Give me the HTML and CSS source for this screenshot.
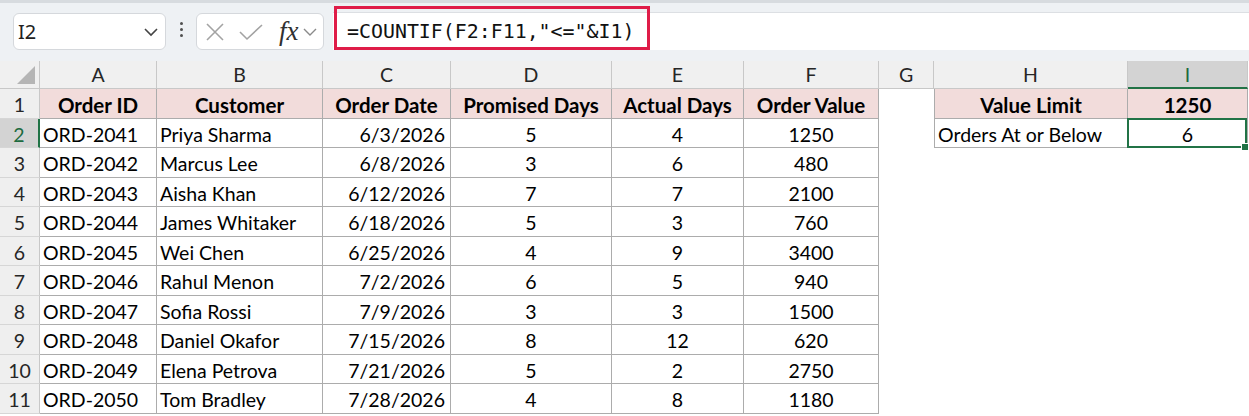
FILE: index.html
```html
<!DOCTYPE html>
<html>
    <head>
        <title>Orders sheet</title>
        <link rel="stylesheet" href="styles.css">
    </head>
    <body>
        <div class="toolbar">
            <div class="namebox">
                <span>I2</span>
                <svg class="chev" width="16" height="10" viewBox="0 0 16 10"><polyline points="2,2 8,8 14,2" fill="none" stroke="#444" stroke-width="1.6"/></svg>
            </div>
            <div class="grip"><i></i><i></i><i></i></div>
            <div class="fxbox">
                <svg width="20" height="20" viewBox="0 0 20 20"><path d="M2 2 L18 18 M18 2 L2 18" stroke="#a3a3a3" stroke-width="1.6" fill="none"/></svg>
                <svg width="26" height="20" viewBox="0 0 26 20"><polyline points="2,10 9,17 24,3" stroke="#a3a3a3" stroke-width="1.6" fill="none"/></svg>
                <span class="fx">fx</span>
                <svg class="chev-sm" width="16" height="10" viewBox="0 0 16 10"><polyline points="2,2 8,8 14,2" fill="none" stroke="#8a8a8a" stroke-width="1.4"/></svg>
            </div>
            <div class="formula">
                <span class="formula-text">=COUNTIF(F2:F11,"&lt;="&amp;I1)</span>
                <div class="highlight"></div>
            </div>
        </div>

        <div class="sheet">
            <div class="corner"><svg width="20" height="20" viewBox="0 0 20 20"><polygon points="19,1 19,19 1,19" fill="#b5b5b5"/></svg></div>
            <div class="colhead">A</div>
            <div class="colhead">B</div>
            <div class="colhead">C</div>
            <div class="colhead">D</div>
            <div class="colhead">E</div>
            <div class="colhead">F</div>
            <div class="colhead">G</div>
            <div class="colhead">H</div>
            <div class="colhead active">I</div>

            <div class="rowhead">1</div>
            <div class="cell t hdr">Order ID</div>
            <div class="cell t hdr">Customer</div>
            <div class="cell t hdr">Order Date</div>
            <div class="cell t hdr">Promised Days</div>
            <div class="cell t hdr">Actual Days</div>
            <div class="cell t hdr">Order Value</div>
            <div class="cell"></div>
            <div class="cell t tl hdr">Value Limit</div>
            <div class="cell t hdr">1250</div>

            <div class="rowhead active">2</div>
            <div class="cell t l">ORD-2041</div>
            <div class="cell t l">Priya Sharma</div>
            <div class="cell t r">6/3/2026</div>
            <div class="cell t c">5</div>
            <div class="cell t c">4</div>
            <div class="cell t c">1250</div>
            <div class="cell"></div>
            <div class="cell t tl l">Orders At or Below</div>
            <div class="cell t c sel">6</div>

            <div class="rowhead">3</div>
            <div class="cell t l">ORD-2042</div>
            <div class="cell t l">Marcus Lee</div>
            <div class="cell t r">6/8/2026</div>
            <div class="cell t c">3</div>
            <div class="cell t c">6</div>
            <div class="cell t c">480</div>

            <div class="rowhead">4</div>
            <div class="cell t l">ORD-2043</div>
            <div class="cell t l">Aisha Khan</div>
            <div class="cell t r">6/12/2026</div>
            <div class="cell t c">7</div>
            <div class="cell t c">7</div>
            <div class="cell t c">2100</div>

            <div class="rowhead">5</div>
            <div class="cell t l">ORD-2044</div>
            <div class="cell t l">James Whitaker</div>
            <div class="cell t r">6/18/2026</div>
            <div class="cell t c">5</div>
            <div class="cell t c">3</div>
            <div class="cell t c">760</div>

            <div class="rowhead">6</div>
            <div class="cell t l">ORD-2045</div>
            <div class="cell t l">Wei Chen</div>
            <div class="cell t r">6/25/2026</div>
            <div class="cell t c">4</div>
            <div class="cell t c">9</div>
            <div class="cell t c">3400</div>

            <div class="rowhead">7</div>
            <div class="cell t l">ORD-2046</div>
            <div class="cell t l">Rahul Menon</div>
            <div class="cell t r">7/2/2026</div>
            <div class="cell t c">6</div>
            <div class="cell t c">5</div>
            <div class="cell t c">940</div>

            <div class="rowhead">8</div>
            <div class="cell t l">ORD-2047</div>
            <div class="cell t l">Sofia Rossi</div>
            <div class="cell t r">7/9/2026</div>
            <div class="cell t c">3</div>
            <div class="cell t c">3</div>
            <div class="cell t c">1500</div>

            <div class="rowhead">9</div>
            <div class="cell t l">ORD-2048</div>
            <div class="cell t l">Daniel Okafor</div>
            <div class="cell t r">7/15/2026</div>
            <div class="cell t c">8</div>
            <div class="cell t c">12</div>
            <div class="cell t c">620</div>

            <div class="rowhead">10</div>
            <div class="cell t l">ORD-2049</div>
            <div class="cell t l">Elena Petrova</div>
            <div class="cell t r">7/21/2026</div>
            <div class="cell t c">5</div>
            <div class="cell t c">2</div>
            <div class="cell t c">2750</div>

            <div class="rowhead">11</div>
            <div class="cell t l">ORD-2050</div>
            <div class="cell t l">Tom Bradley</div>
            <div class="cell t r">7/28/2026</div>
            <div class="cell t c">4</div>
            <div class="cell t c">8</div>
            <div class="cell t c">1180</div>
        </div>
    </body>
</html>
```

FILE: styles.css
```css
body {
    margin: 0;
    background-color: white;
    font-family: Lato, "Noto Sans", sans-serif;
    overflow: hidden;
}

/* formula bar */
.toolbar {
    box-sizing: border-box;
    height: 61px;
    border-top: 3px solid #d7dbdf;
    background-color: #eef1f4;
    display: flex;
    align-items: flex-start;
    padding: 9px 0 0 13px;
}
.namebox {
    box-sizing: border-box;
    width: 153px;
    height: 37px;
    margin-top: 1px;
    background-color: white;
    border: 1px solid #d5d8dc;
    border-radius: 6px;
    display: flex;
    align-items: center;
    justify-content: space-between;
    padding: 0 6px 0 4px;
    font-family: "Noto Sans", sans-serif;
    font-size: 20px;
    color: #222;
}
.grip {
    width: 30px;
    display: flex;
    flex-direction: column;
    align-items: center;
    gap: 3px;
    padding-top: 10px;
}
.grip i {
    width: 3px;
    height: 3px;
    border-radius: 50%;
    background-color: #505050;
}
.fxbox {
    box-sizing: border-box;
    width: 128px;
    height: 37px;
    margin-top: 1px;
    background-color: white;
    border: 1px solid #d5d8dc;
    border-radius: 6px;
    display: flex;
    align-items: center;
    padding-left: 8px;
    gap: 13px;
}
.fx {
    font-family: "Liberation Serif", serif;
    font-style: italic;
    font-size: 27px;
    color: #303030;
    margin-left: 2px;
    margin-right: -10px;
    line-height: 1;
}
.formula {
    position: relative;
    flex: 1;
    height: 38px;
    margin-left: 9px;
    background-color: white;
    border-top: 1px solid #dcdfe3;
    box-sizing: border-box;
    display: flex;
    align-items: center;
    padding-left: 14px;
}
.formula-text {
    font-family: "DejaVu Sans Mono", monospace;
    font-size: 19.9px;
    color: #111;
}
.highlight {
    position: absolute;
    left: 1px;
    top: -7px;
    width: 316px;
    height: 44px;
    box-sizing: border-box;
    border: 3px solid #df1c48;
}

/* sheet grid */
.sheet {
    display: grid;
    grid-template-columns: 40px 117px 166px 128px 161px 132px 135px 55px 194px 120px;
    grid-template-rows: 28px repeat(5, 30px 29px) 30px;
    font-size: 19.5px;
    color: #000;
}
.corner, .colhead, .rowhead {
    box-sizing: border-box;
    background-color: #f0f0f0;
    border-right: 1px solid #c8c8c8;
    border-bottom: 1px solid #c8c8c8;
    color: #262626;
    display: flex;
    align-items: center;
    justify-content: center;
    font-size: 19.5px;
}
.corner {
    align-items: flex-end;
    justify-content: flex-end;
    padding: 0 3px 3px 0;
}
.rowhead {
    grid-column: 1;
    background-color: #efefef;
    border-bottom-color: #d6d6d6;
    padding-top: 2px;
}
.colhead.active {
    background-color: #d3d3d3;
    color: #1d6b40;
    border-bottom: 2px solid #217346;
}
.rowhead.active {
    background-color: #d3d3d3;
    color: #1d6b40;
    border-right: 2px solid #217346;
}
.cell {
    box-sizing: border-box;
    display: flex;
    align-items: center;
    white-space: nowrap;
    padding-top: 2px;
}
.t {
    border-right: 1px solid #acacac;
    border-bottom: 1px solid #acacac;
}
.tl {
    border-left: 1px solid #acacac;
}
.hdr {
    background-color: #f2dcdb;
    font-weight: bold;
    font-size: 20.5px;
    justify-content: center;
}
.l { padding-left: 3px; }
.r { justify-content: flex-end; padding-right: 5px; }
.c { justify-content: center; }

.sel {
    position: relative;
}
.sel::after {
    content: "";
    position: absolute;
    left: -1px;
    top: -1px;
    right: 0;
    bottom: -1px;
    border: 2px solid #217346;
}
.sel::before {
    content: "";
    position: absolute;
    right: -2px;
    bottom: -4px;
    width: 6px;
    height: 6px;
    background-color: #217346;
    border: 1px solid white;
    z-index: 1;
}
```
